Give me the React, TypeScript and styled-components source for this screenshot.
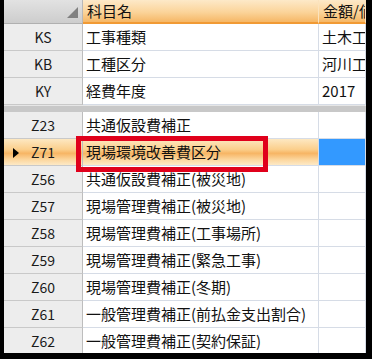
import React from "react";
import styled, { createGlobalStyle, css } from "styled-components";

const GlobalStyle = createGlobalStyle`
  html, body {
    margin: 0;
    padding: 0;
    background: #000;
  }
  body {
    font-family: "Noto Sans CJK JP", "Noto Sans", sans-serif;
  }
`;

const Frame = styled.div`
  position: relative;
  width: 372px;
  height: 359px;
  box-sizing: border-box;
  padding: 0 6px 6px 4px;
  background: #000;
`;

const Grid = styled.div`
  height: 100%;
  background: #fff;
  overflow: hidden;
  display: flex;
  flex-direction: column;
`;

const columns = "79px 236px 1fr";

const HeaderRow = styled.div`
  display: grid;
  grid-template-columns: ${columns};
  height: 24px;
  flex: none;
`;

const Corner = styled.div`
  position: relative;
  background: linear-gradient(#e2e2e2, #cdcdcd);
  border-right: 1px solid #b8b8b8;
  border-bottom: 1px solid #b0b0b0;
  &::after {
    content: "";
    position: absolute;
    right: 4px;
    bottom: 5px;
    width: 0;
    height: 0;
    border-left: 11px solid transparent;
    border-bottom: 11px solid #808080;
  }
`;

const ColHead = styled.div`
  background: linear-gradient(#fde9c8 0%, #fbd49a 55%, #f6b766 100%);
  border-right: 1px solid #fbe3bd;
  border-bottom: 2px solid #f19a34;
  padding-left: 4px;
  font-size: 15px;
  line-height: 22px;
  color: #111;
  white-space: nowrap;
  overflow: hidden;
`;

const Row = styled.div`
  display: grid;
  grid-template-columns: ${columns};
  height: 27px;
  flex: none;
`;

const selectedBg = css`
  background: linear-gradient(
    #fde8c2 0%,
    #fbcf8c 40%,
    #f7b564 55%,
    #fcd79f 80%,
    #fde9c6 100%
  );
`;

const RowHead = styled.div<{ $selected?: boolean }>`
  position: relative;
  background: #ededed;
  ${(p) => p.$selected && selectedBg}
  border-right: 1px solid #bdbdbd;
  border-bottom: 1px solid #c9c9c9;
  font-size: 14px;
  line-height: 26px;
  text-align: center;
  color: #1a1a1a;
`;

const Pointer = styled.span`
  position: absolute;
  left: 9px;
  top: 9px;
  width: 0;
  height: 0;
  border-top: 5px solid transparent;
  border-bottom: 5px solid transparent;
  border-left: 6px solid #000;
`;

const Cell = styled.div<{ $selected?: boolean; $focus?: boolean }>`
  background: #fff;
  ${(p) => p.$selected && selectedBg}
  ${(p) => p.$focus && "background: #3399ff;"}
  border-right: 1px solid #d6dce6;
  border-bottom: 1px solid #d6dce6;
  padding-left: 3px;
  font-size: 15px;
  line-height: 26px;
  color: #111;
  white-space: nowrap;
  overflow: hidden;
`;

const Separator = styled.div`
  height: 7px;
  flex: none;
  background: #c8c8c8;
  border-top: 1px solid #e6e6e6;
  box-sizing: border-box;
`;

const Highlight = styled.div`
  position: absolute;
  left: 76px;
  top: 136px;
  width: 192px;
  height: 36px;
  box-sizing: border-box;
  border: 5px solid #e0001b;
  pointer-events: none;
`;

const topRows = [
  { code: "KS", name: "工事種類", value: "土木工事" },
  { code: "KB", name: "工種区分", value: "河川工事" },
  { code: "KY", name: "経費年度", value: "2017" },
];

const rows = [
  { code: "Z23", name: "共通仮設費補正" },
  { code: "Z71", name: "現場環境改善費区分", selected: true },
  { code: "Z56", name: "共通仮設費補正(被災地)" },
  { code: "Z57", name: "現場管理費補正(被災地)" },
  { code: "Z58", name: "現場管理費補正(工事場所)" },
  { code: "Z59", name: "現場管理費補正(緊急工事)" },
  { code: "Z60", name: "現場管理費補正(冬期)" },
  { code: "Z61", name: "一般管理費補正(前払金支出割合)" },
  { code: "Z62", name: "一般管理費補正(契約保証)" },
];

export default function App() {
  return (
    <Frame>
      <GlobalStyle />
      <Grid>
        <HeaderRow>
          <Corner />
          <ColHead>科目名</ColHead>
          <ColHead>金額/値</ColHead>
        </HeaderRow>
        {topRows.map((r) => (
          <Row key={r.code}>
            <RowHead>{r.code}</RowHead>
            <Cell>{r.name}</Cell>
            <Cell>{r.value}</Cell>
          </Row>
        ))}
        <Separator />
        {rows.map((r) => (
          <Row key={r.code}>
            <RowHead $selected={r.selected}>
              {r.selected && <Pointer />}
              {r.code}
            </RowHead>
            <Cell $selected={r.selected}>{r.name}</Cell>
            <Cell $focus={r.selected} />
          </Row>
        ))}
      </Grid>
      <Highlight />
    </Frame>
  );
}
